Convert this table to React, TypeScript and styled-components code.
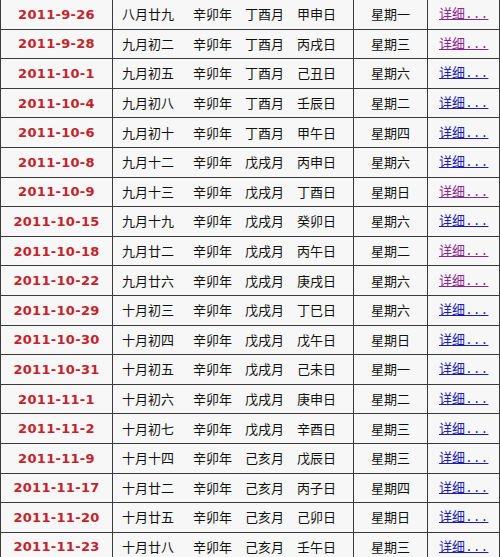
import React from 'react'
import styled, { createGlobalStyle } from 'styled-components'

const Global = createGlobalStyle`
  html, body {
    margin: 0;
    padding: 0;
    background: #ffffff;
  }
  body {
    width: 500px;
    height: 557px;
    overflow: hidden;
  }
`

const Table = styled.table`
  border-collapse: collapse;
  width: 500px;
  margin-top: -1px;
  table-layout: fixed;
  font-family: "Noto Sans CJK SC", "DejaVu Sans", sans-serif;
  font-size: 13px;
  color: #111;
`

const Row = styled.tr`
  height: 29.6px;
`

const Cell = styled.td<{ $w?: number; $align?: string }>`
  width: ${p => (p.$w ? `${p.$w}px` : 'auto')};
  text-align: ${p => p.$align || 'left'};
  background: #f7f7f7;
  border: 1px solid #3a3a3a;
  padding: 0;
  white-space: nowrap;
  line-height: 16px;
  box-sizing: border-box;
`

const DateText = styled.span`
  font-family: "DejaVu Sans", Verdana, sans-serif;
  font-weight: bold;
  font-size: 13px;
  letter-spacing: 0.3px;
  color: #c4232b;
`

const Lunar = styled.div`
  display: flex;
  align-items: center;
  gap: 13px;
  padding-left: 9px;
`

const LunarDay = styled.span`
  width: 58px;
`

const Link = styled.a<{ $visited?: boolean }>`
  margin-left: 11px;
  color: ${p => (p.$visited ? '#8d2590' : '#1c1cb4')};
  text-decoration: underline;
  cursor: pointer;
`

const Dots = styled.span`
  font-family: "Liberation Mono", monospace;
  font-size: 13px;
`

type Item = {
  date: string
  lunar: string
  year: string
  month: string
  day: string
  week: string
  visited?: boolean
}

const rows: Item[] = [
  { date: '2011-9-26', lunar: '八月廿九', year: '辛卯年', month: '丁酉月', day: '甲申日', week: '星期一', visited: true },
  { date: '2011-9-28', lunar: '九月初二', year: '辛卯年', month: '丁酉月', day: '丙戌日', week: '星期三', visited: true },
  { date: '2011-10-1', lunar: '九月初五', year: '辛卯年', month: '丁酉月', day: '己丑日', week: '星期六' },
  { date: '2011-10-4', lunar: '九月初八', year: '辛卯年', month: '丁酉月', day: '壬辰日', week: '星期二' },
  { date: '2011-10-6', lunar: '九月初十', year: '辛卯年', month: '丁酉月', day: '甲午日', week: '星期四' },
  { date: '2011-10-8', lunar: '九月十二', year: '辛卯年', month: '戊戌月', day: '丙申日', week: '星期六' },
  { date: '2011-10-9', lunar: '九月十三', year: '辛卯年', month: '戊戌月', day: '丁酉日', week: '星期日', visited: true },
  { date: '2011-10-15', lunar: '九月十九', year: '辛卯年', month: '戊戌月', day: '癸卯日', week: '星期六' },
  { date: '2011-10-18', lunar: '九月廿二', year: '辛卯年', month: '戊戌月', day: '丙午日', week: '星期二', visited: true },
  { date: '2011-10-22', lunar: '九月廿六', year: '辛卯年', month: '戊戌月', day: '庚戌日', week: '星期六', visited: true },
  { date: '2011-10-29', lunar: '十月初三', year: '辛卯年', month: '戊戌月', day: '丁巳日', week: '星期六' },
  { date: '2011-10-30', lunar: '十月初四', year: '辛卯年', month: '戊戌月', day: '戊午日', week: '星期日' },
  { date: '2011-10-31', lunar: '十月初五', year: '辛卯年', month: '戊戌月', day: '己未日', week: '星期一' },
  { date: '2011-11-1', lunar: '十月初六', year: '辛卯年', month: '戊戌月', day: '庚申日', week: '星期二' },
  { date: '2011-11-2', lunar: '十月初七', year: '辛卯年', month: '戊戌月', day: '辛酉日', week: '星期三' },
  { date: '2011-11-9', lunar: '十月十四', year: '辛卯年', month: '己亥月', day: '戊辰日', week: '星期三' },
  { date: '2011-11-17', lunar: '十月廿二', year: '辛卯年', month: '己亥月', day: '丙子日', week: '星期四' },
  { date: '2011-11-20', lunar: '十月廿五', year: '辛卯年', month: '己亥月', day: '己卯日', week: '星期日' },
  { date: '2011-11-23', lunar: '十月廿八', year: '辛卯年', month: '己亥月', day: '壬午日', week: '星期三' },
]

export default function App() {
  return (
    <>
      <Global />
      <Table>
        <tbody>
          {rows.map(r => (
            <Row key={r.date}>
              <Cell $w={112} $align="center">
                <DateText>{r.date}</DateText>
              </Cell>
              <Cell $w={241}>
                <Lunar>
                  <LunarDay>{r.lunar}</LunarDay>
                  <span>{r.year}</span>
                  <span>{r.month}</span>
                  <span>{r.day}</span>
                </Lunar>
              </Cell>
              <Cell $w={74} $align="center">{r.week}</Cell>
              <Cell>
                <Link $visited={r.visited}>详细<Dots>...</Dots></Link>
              </Cell>
            </Row>
          ))}
        </tbody>
      </Table>
    </>
  )
}
